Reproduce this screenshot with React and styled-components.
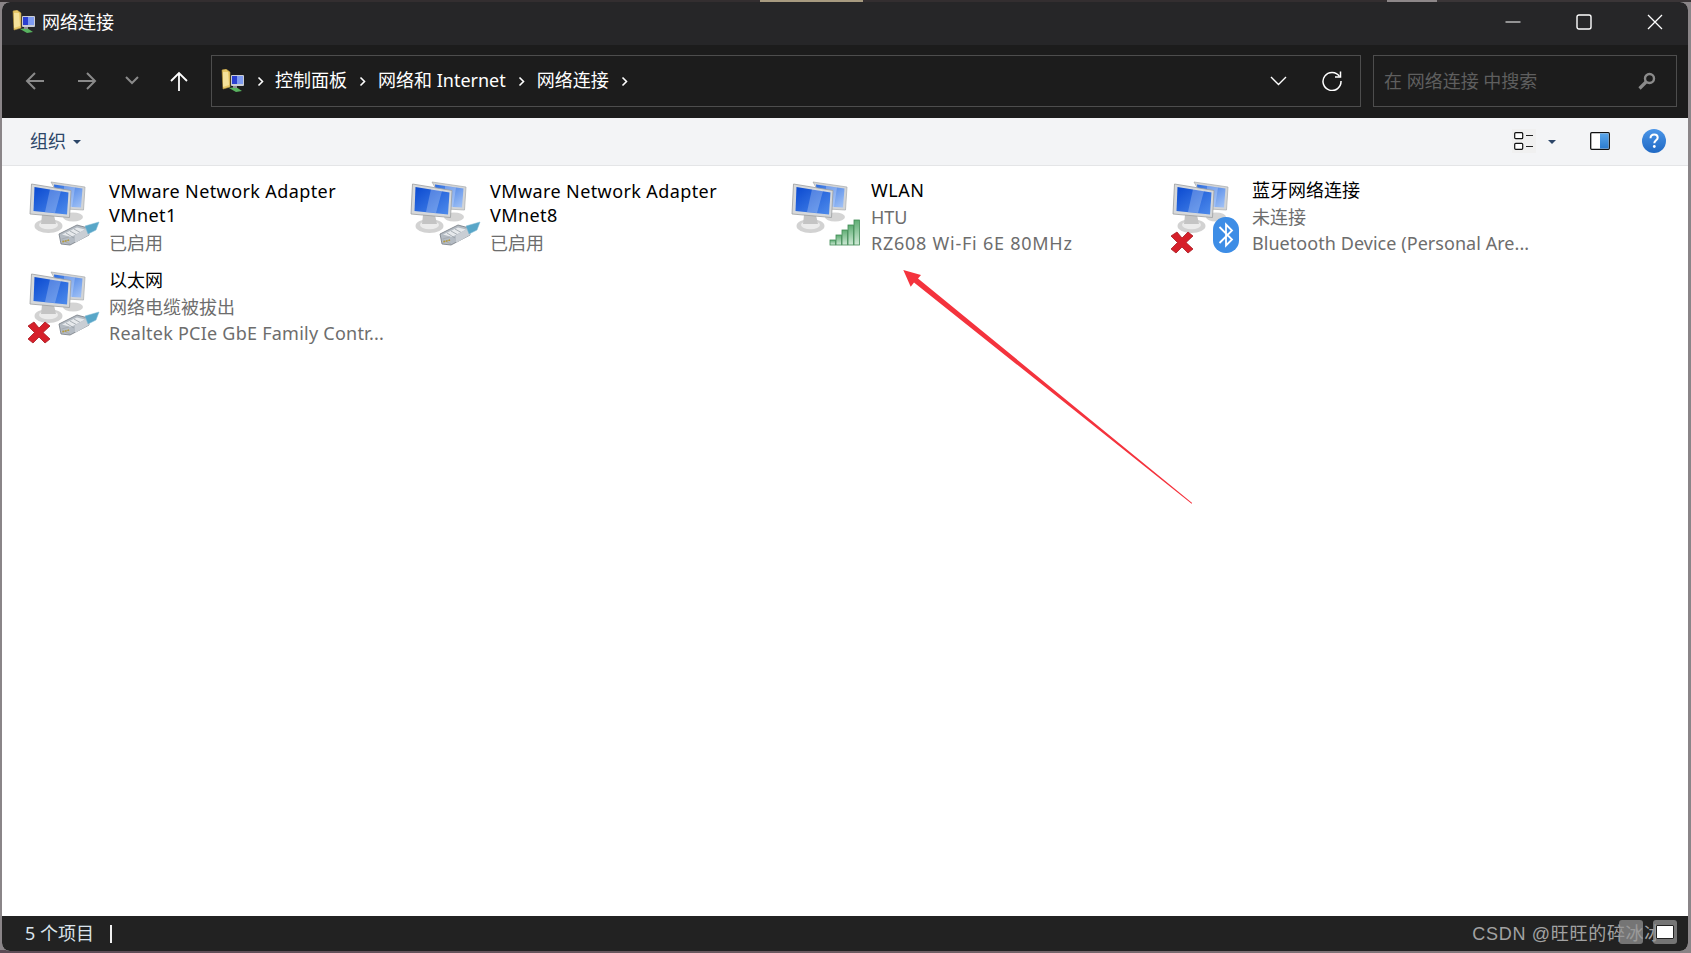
import React from 'react'
import styled, { createGlobalStyle } from 'styled-components'

const FONT = `"Noto Sans", "Noto Sans CJK SC", sans-serif`

const GlobalStyle = createGlobalStyle`
  html, body { margin: 0; padding: 0; overflow: hidden; background: #3b3539; }
  * { box-sizing: border-box; }
`

const Desktop = styled.div`
  position: relative;
  width: 1691px;
  height: 953px;
  padding: 2px 3px 2px 2px;
  font-family: ${FONT};
  font-size: 18px;
  background:
    linear-gradient(90deg, #332e30 0 760px, #a79a80 760px 863px, #332e30 863px 1387px, #8d8789 1387px 1437px, #3a3537 1437px) top / 100% 2px no-repeat,
    linear-gradient(90deg, #5c4a55, #6b5a60 50%, #8a8386) bottom / 100% 3px no-repeat,
    #8a8588;
`

const Window = styled.div`
  display: flex;
  flex-direction: column;
  height: 949px;
  overflow: hidden;
  border-radius: 8px;
  background: #fff;
`

const TitleBar = styled.div`
  display: flex;
  align-items: center;
  flex: 0 0 43px;
  padding: 0 0 3px 10px;
  background: #262628;
  color: #fff;
`

const TitleText = styled.span`
  margin-left: 6px;
  line-height: 24px;
`

const WindowControls = styled.div`
  display: flex;
  align-items: center;
  gap: 55px;
  margin-left: auto;
  padding-right: 25px;
`

const ControlButton = styled.button`
  display: flex;
  width: 16px;
  height: 16px;
  padding: 0;
  border: 0;
  background: none;
`

const NavBar = styled.div`
  display: flex;
  align-items: center;
  flex: 0 0 73px;
  padding: 0 11px 1px 0;
  background: #1c1c1c;
`

const NavGroup = styled.div`
  display: flex;
  align-items: center;
  flex: 0 0 209px;
  padding: 0 0 1px 8px;
`

const NavButton = styled.button`
  display: flex;
  align-items: center;
  justify-content: center;
  width: ${p => p.$w}px;
  height: 36px;
  padding: 0;
  border: 0;
  background: none;
  color: ${p => (p.$active ? '#fff' : '#8a8a8a')};
`

const AddressBox = styled.div`
  display: flex;
  align-items: center;
  flex: 0 0 1150px;
  height: 52px;
  padding-left: 9px;
  border: 1px solid #4d4d4d;
  color: #fff;
`

const Crumb = styled.span`
  padding-bottom: 2px;
  line-height: 24px;
  white-space: pre;
`

const CrumbSep = styled.span`
  display: flex;
  justify-content: center;
  width: ${p => p.$w || 31}px;
`

const AddressTools = styled.div`
  display: flex;
  align-items: center;
  margin-left: auto;
  padding-right: 18px;
  gap: 35px;
`

const SearchBox = styled.div`
  display: flex;
  align-items: center;
  justify-content: space-between;
  flex: 0 0 304px;
  height: 52px;
  margin-left: 12px;
  padding: 0 20px 0 10px;
  border: 1px solid #4d4d4d;
  color: #5f5f5f;
  white-space: pre;
`

const SearchText = styled.span`
  padding-bottom: 2px;
`

const Toolbar = styled.div`
  display: flex;
  align-items: center;
  flex: 0 0 48px;
  padding: 0 22px 2px 28px;
  border-bottom: 1px solid #e4e5e7;
  background: #f3f4f6;
`

const OrganizeButton = styled.span`
  display: flex;
  align-items: center;
  gap: 7px;
  padding-bottom: 2px;
  color: #2c4668;
`

const Caret = styled.span`
  width: 0;
  height: 0;
  margin-top: 4px;
  border-left: 4px solid transparent;
  border-right: 4px solid transparent;
  border-top: 4px solid #2c4668;
`

const ToolGroup = styled.div`
  display: flex;
  align-items: center;
  margin-left: auto;
`

const ViewsButton = styled.span`
  display: flex;
  align-items: center;
  justify-content: center;
  width: 24px;
  height: 24px;
  background: #f0f0f0;
`

const ViewsCaret = styled.span`
  display: flex;
  margin: 0 34px 0 12px;
  padding-bottom: 2px;
`

const HelpIcon = styled.svg`
  margin-left: 32px;
`

const Content = styled.div`
  flex: 1;
  display: grid;
  grid-template-columns: repeat(4, 381px);
  grid-auto-rows: 90px;
  padding: 14px 0 0 24px;
`

const Item = styled.div`
  display: flex;
  align-items: flex-start;
`

const ItemIcon = styled.svg`
  flex: 0 0 82px;
  width: 82px;
  height: 74px;
  margin-right: 1px;
  filter: blur(0.35px);
`

const ItemText = styled.div`
  display: flex;
  flex-direction: column;
  margin-top: ${p => p.$top - 2}px;
`

const ItemName = styled.div`
  color: #000;
  line-height: 24px;
  margin-bottom: ${p => p.$gap}px;
  letter-spacing: ${p => p.$track || 0}px;
`

const ItemDetail = styled.div`
  color: #6d6d6d;
  line-height: 26px;
  white-space: nowrap;
  letter-spacing: ${p => p.$track || 0}px;
`

const StatusBar = styled.div`
  display: flex;
  align-items: center;
  flex: 0 0 35px;
  padding: 0 25px 0 23px;
  background: #222;
  color: #dbe4ec;
`

const StatusText = styled.span`
  padding-bottom: 4px;
`

const Cursor = styled.span`
  width: 2px;
  height: 18px;
  margin-left: 16px;
  background: #f0f0f0;
`

const Watermark = styled.span`
  position: relative;
  margin-left: auto;
  padding-bottom: 4px;
  color: #a2a2a2;
  font-family: "Liberation Sans", "Noto Sans CJK SC", sans-serif;
  letter-spacing: 0.7px;
  white-space: nowrap;
`

const WatermarkBadge = styled.span`
  position: absolute;
  top: 1px;
  right: ${p => p.$right}px;
  display: flex;
  align-items: center;
  justify-content: center;
  width: 24px;
  height: 24px;
  border-radius: 3px;
  background: rgba(150, 150, 150, 0.72);
`

const BadgeScreen = styled.span`
  width: 18px;
  height: 14px;
  border: 1px solid #222;
  border-radius: 1px;
  background: #fff;
`

const ArrowOverlay = styled.svg`
  position: absolute;
  left: 0;
  top: 0;
  width: 1691px;
  height: 953px;
  pointer-events: none;
`

function FolderIcon() {
  return (
    <svg width="24" height="24" viewBox="0 0 24 24">
      <path d="M1 1 L5 0 L9 3 L9 18 L2 20 Z" fill="#e8c968" stroke="#b3963f" strokeWidth=".6" />
      <path d="M2 3 L7 3 L8 16 L2 18 Z" fill="#f5e29a" />
      <rect x="10" y="6" width="13" height="11" rx="1" fill="#c9ccd4" />
      <rect x="11" y="7" width="11" height="8" fill="#2a3fd0" />
      <rect x="16" y="7" width="6" height="8" fill="#7f9bf0" />
      <path d="M8 19 L15 18 L21 22 L15 23 Z" fill="#58b35f" />
      <path d="M12 17 h4 v2 h-4 Z" fill="#8d8f96" />
    </svg>
  )
}

function Computers() {
  return (
    <g>
      <ellipse cx="45" cy="37" rx="10" ry="4.5" fill="#d4d4d4" />
      <path d="M23 2 L57 7 L55.5 30 L38 29 Z" fill="#d2d4d6" stroke="#a8aaac" strokeWidth=".7" />
      <path d="M26 4.5 L54.5 8.5 L53 27.5 L28 26 Z" fill="url(#screenB)" />
      <path d="M36 6 L47 7.5 L44 27 L36 26.5 Z" fill="#fff" opacity=".25" />
      <ellipse cx="20.5" cy="46" rx="14" ry="7" fill="#d2d2d2" />
      <ellipse cx="20.5" cy="45" rx="9.5" ry="4.2" fill="#ebebeb" />
      <path d="M14 35 h12 l2 9 h-15 Z" fill="#c4c4c4" />
      <path d="M3.5 4 L43 10.5 L41.5 37.5 L2 34 Z" fill="#d6d8da" stroke="#9c9ea0" strokeWidth=".8" />
      <path d="M6.5 7 L40.5 12.5 L39 34.5 L5.5 31 Z" fill="url(#screenA)" />
      <path d="M22 9 L33 11 L27 33 L17 32 Z" fill="#fff" opacity=".24" />
    </g>
  )
}

function Plug() {
  return (
    <g>
      <path d="M31 54 L49 45 L60 48 L61 55 L42 65 L33 64 Z" fill="#b4bbc3" stroke="#737a82" strokeWidth=".8" />
      <path d="M34 54.5 L49 47.5 L57 49.5 L43 57 Z" fill="#e6e9ec" />
      <path d="M38 53 L46 58 M42 51 L50 55.5 M46 49 L54 53.5" stroke="#8f969d" strokeWidth=".7" />
      <path d="M34 60 L42 64 M34 62 L41 60 M33.5 59 L41 57" stroke="#9aa0a6" strokeWidth=".6" />
      <path d="M34.5 62 l1.5 -.8 m1 .1 l1.5 -.8 m1 .1 l1.5 -.8" stroke="#b89b35" strokeWidth="1.5" />
      <path d="M47 55 L60 48 L61 55 L47 63 Z" fill="#c9ced4" />
      <path d="M57 46 L71 42 L68 50 L60 54 Z" fill="#58a6c8" stroke="#7fb9d2" strokeWidth=".5" />
    </g>
  )
}

function RedX() {
  return (
    <path
      d="M0 56 L6 52 L11 58 L17 52 L22 56 L15 62.5 L22 69 L17 73 L11 67 L5 73 L0 69 L6.5 62.5 Z"
      fill="#d6202a"
      stroke="#a81a22"
      strokeWidth=".8"
    />
  )
}

function Bars() {
  const bars = [[40, 60, 5], [46, 55, 10], [52, 50, 15], [58, 45, 20], [64, 40, 25]]
  return (
    <g>
      {bars.map(([x, y, h]) => (
        <rect key={x} x={x} y={y} width="5.4" height={h} fill="url(#signal)" stroke="#3f8a54" strokeWidth=".8" />
      ))}
    </g>
  )
}

function Bluetooth() {
  return (
    <g>
      <rect x="42" y="37" width="26" height="36" rx="12.5" fill="#3d8de6" />
      <path d="M48.5 47 L61 59.5 L55 65.5 L55 44.5 L61 50.5 L48.5 63" fill="none" stroke="#fff" strokeWidth="1.8" />
    </g>
  )
}

function NetworkIcon({ badge, failed }) {
  return (
    <ItemIcon viewBox="-2 0 82 74">
      <defs>
        <linearGradient id="screenA" x1="0" y1="0" x2="1" y2="1">
          <stop offset="0" stopColor="#0a49d0" />
          <stop offset="1" stopColor="#4f8cec" />
        </linearGradient>
        <linearGradient id="screenB" x1="0" y1="0" x2="1" y2="1">
          <stop offset="0" stopColor="#2a6be0" />
          <stop offset="1" stopColor="#a4c4f6" />
        </linearGradient>
        <linearGradient id="signal" x1="0" y1="0" x2="0" y2="1">
          <stop offset="0" stopColor="#5fae74" />
          <stop offset="1" stopColor="#cfe9d6" />
        </linearGradient>
      </defs>
      <Computers />
      {badge === 'plug' && <Plug />}
      {badge === 'bars' && <Bars />}
      {badge === 'bluetooth' && <Bluetooth />}
      {failed && <RedX />}
    </ItemIcon>
  )
}

function CrumbChevron() {
  return (
    <svg width="7" height="11" viewBox="0 0 7 11">
      <path d="M1.5 1.5 L5.5 5.5 L1.5 9.5" fill="none" stroke="#fff" strokeWidth="1.6" />
    </svg>
  )
}

const items = [
  {
    name: [{ text: 'VMware Network Adapter', track: 0.4 }, { text: 'VMnet1', track: 0.4 }],
    details: [{ text: '已启用' }],
    badge: 'plug',
    top: 1,
  },
  {
    name: [{ text: 'VMware Network Adapter', track: 0.4 }, { text: 'VMnet8', track: 0.4 }],
    details: [{ text: '已启用' }],
    badge: 'plug',
    top: 1,
  },
  {
    name: [{ text: 'WLAN', track: 0.5 }],
    details: [{ text: 'HTU' }, { text: 'RZ608 Wi-Fi 6E 80MHz', track: 0.75 }],
    badge: 'bars',
    top: 0,
  },
  {
    name: [{ text: '蓝牙网络连接' }],
    details: [{ text: '未连接' }, { text: 'Bluetooth Device (Personal Are...', track: 0.05 }],
    badge: 'bluetooth',
    failed: true,
    top: 0,
  },
  {
    name: [{ text: '以太网' }],
    details: [{ text: '网络电缆被拔出' }, { text: 'Realtek PCIe GbE Family Contr...', track: 0.24 }],
    badge: 'plug',
    failed: true,
    top: 0,
  },
]

function App() {
  return (
    <Desktop>
      <GlobalStyle />
      <Window>
        <TitleBar>
          <FolderIcon />
          <TitleText>网络连接</TitleText>
          <WindowControls>
            <ControlButton>
              <svg width="16" height="16" viewBox="0 0 16 16">
                <path d="M0.5 8 H15.5" stroke="#fff" strokeWidth="1.2" />
              </svg>
            </ControlButton>
            <ControlButton>
              <svg width="16" height="16" viewBox="0 0 16 16">
                <rect x="1" y="1" width="14" height="14" rx="2" fill="none" stroke="#fff" strokeWidth="1.4" />
              </svg>
            </ControlButton>
            <ControlButton>
              <svg width="16" height="16" viewBox="0 0 16 16">
                <path d="M1 1 L15 15 M15 1 L1 15" stroke="#fff" strokeWidth="1.3" />
              </svg>
            </ControlButton>
          </WindowControls>
        </TitleBar>

        <NavBar>
          <NavGroup>
            <NavButton $w={50}>
              <svg width="20" height="20" viewBox="0 0 20 20">
                <path d="M19 10 H2 M10 2 L2 10 L10 18" fill="none" stroke="currentColor" strokeWidth="2" />
              </svg>
            </NavButton>
            <NavButton $w={54}>
              <svg width="20" height="20" viewBox="0 0 20 20">
                <path d="M1 10 H18 M10 2 L18 10 L10 18" fill="none" stroke="currentColor" strokeWidth="2" />
              </svg>
            </NavButton>
            <NavButton $w={35}>
              <svg width="14" height="9" viewBox="0 0 14 9">
                <path d="M1 1 L7 7 L13 1" fill="none" stroke="currentColor" strokeWidth="2" />
              </svg>
            </NavButton>
            <NavButton $w={60} $active>
              <svg width="20" height="20" viewBox="0 0 20 20">
                <path d="M10 20 V2 M2 10 L10 2 L18 10" fill="none" stroke="currentColor" strokeWidth="1.8" />
              </svg>
            </NavButton>
          </NavGroup>

          <AddressBox>
            <FolderIcon />
            <CrumbSep $w={30}><CrumbChevron /></CrumbSep>
            <Crumb>控制面板</Crumb>
            <CrumbSep><CrumbChevron /></CrumbSep>
            <Crumb>网络和 Internet</Crumb>
            <CrumbSep><CrumbChevron /></CrumbSep>
            <Crumb>网络连接</Crumb>
            <CrumbSep><CrumbChevron /></CrumbSep>
            <AddressTools>
              <svg width="17" height="10" viewBox="0 0 17 10">
                <path d="M1 1 L8.5 8.5 L16 1" fill="none" stroke="#fff" strokeWidth="1.4" />
              </svg>
              <svg width="20" height="20" viewBox="0 0 20 20">
                <path d="M17.5 5.5 A9 9 0 1 0 19 10" fill="none" stroke="#fff" strokeWidth="1.5" />
                <path d="M18.5 0.5 V6 H13" fill="none" stroke="#fff" strokeWidth="1.5" />
              </svg>
            </AddressTools>
          </AddressBox>

          <SearchBox>
            <SearchText>在 网络连接 中搜索</SearchText>
            <svg width="18" height="18" viewBox="0 0 18 18">
              <circle cx="11.5" cy="6.5" r="4.5" fill="none" stroke="#8a8a8a" strokeWidth="2.4" />
              <path d="M8 10 L1.5 16.5" stroke="#8a8a8a" strokeWidth="3.2" />
            </svg>
          </SearchBox>
        </NavBar>

        <Toolbar>
          <OrganizeButton>
            组织
            <Caret />
          </OrganizeButton>
          <ToolGroup>
            <ViewsButton>
              <svg width="20" height="18" viewBox="0 0 20 18">
                <rect x="0.7" y="0.7" width="8" height="6" rx="1" fill="#fff" stroke="#111" strokeWidth="1.2" />
                <rect x="0.7" y="11.3" width="8" height="6" rx="1" fill="#fff" stroke="#111" strokeWidth="1.2" />
                <path d="M12 3.5 H19 M12 14.5 H19" stroke="#222" strokeWidth="1.2" />
              </svg>
            </ViewsButton>
            <ViewsCaret>
              <Caret />
            </ViewsCaret>
            <svg width="20" height="18" viewBox="0 0 20 18">
              <defs>
                <linearGradient id="pane" x1="0" y1="0" x2="0" y2="1">
                  <stop offset="0" stopColor="#5aa6ea" />
                  <stop offset="1" stopColor="#2a7bd0" />
                </linearGradient>
              </defs>
              <rect x="0.7" y="0.7" width="18.6" height="16.6" rx="1" fill="#fff" stroke="#111" strokeWidth="1.3" />
              <rect x="10" y="1.4" width="8.6" height="15.2" fill="url(#pane)" />
            </svg>
            <HelpIcon width="24" height="24" viewBox="0 0 24 24">
              <defs>
                <linearGradient id="help" x1="0" y1="0" x2="0" y2="1">
                  <stop offset="0" stopColor="#4a95e8" />
                  <stop offset="1" stopColor="#2069c4" />
                </linearGradient>
              </defs>
              <circle cx="12" cy="12" r="12" fill="url(#help)" />
              <path d="M8.5 9.2 C8.6 6.6 10.2 5.6 12.2 5.6 C14.3 5.6 15.7 6.8 15.7 8.7 C15.7 11.2 12.3 11.4 12.3 14.2" fill="none" stroke="#fff" strokeWidth="2" />
              <circle cx="12.3" cy="17.5" r="1.4" fill="#fff" />
            </HelpIcon>
          </ToolGroup>
        </Toolbar>

        <Content>
          {items.map((item, i) => (
            <Item key={i}>
              <NetworkIcon badge={item.badge} failed={item.failed} />
              <ItemText $top={item.top}>
                {item.name.map((line, n) => (
                  <ItemName key={n} $track={line.track} $gap={n === item.name.length - 1 ? (n ? 3 : 2) : 0}>
                    {line.text}
                  </ItemName>
                ))}
                {item.details.map((d, n) => (
                  <ItemDetail key={n} $track={d.track}>{d.text}</ItemDetail>
                ))}
              </ItemText>
            </Item>
          ))}
        </Content>

        <StatusBar>
          <StatusText>5 个项目</StatusText>
          <Cursor />
          <Watermark>
            CSDN @旺旺的碎冰冰
            <WatermarkBadge $right={20} />
            <WatermarkBadge $right={-14}>
              <BadgeScreen />
            </WatermarkBadge>
          </Watermark>
        </StatusBar>
      </Window>

      <ArrowOverlay viewBox="0 0 1691 953">
        <path
          d="M903.3 270 L921 275 L918 278.5 L1192.2 503 L1191.6 503.8 L914 282.5 L910.7 286.7 Z"
          fill="#f4333d"
        />
      </ArrowOverlay>
    </Desktop>
  )
}

export default App
